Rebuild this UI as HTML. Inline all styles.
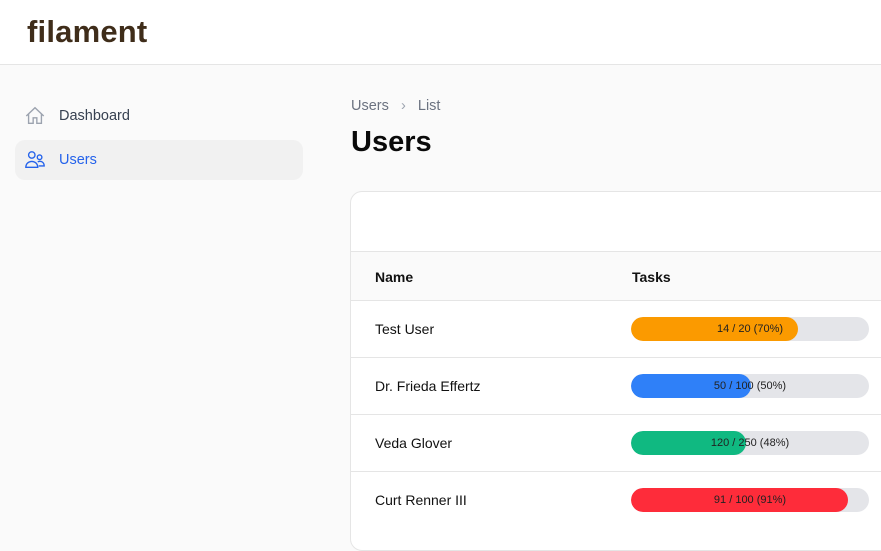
<!DOCTYPE html>
<html><head><style>
*{box-sizing:border-box;margin:0;padding:0}
body{width:881px;height:528px;overflow:hidden;background:#fafafa;font-family:"Liberation Sans",sans-serif;position:relative}
.top{position:absolute;left:0;top:0;width:881px;height:65px;background:#fff;border-bottom:1px solid #e5e5e5}
.logo{position:absolute;left:27px;top:14px;font-size:31px;font-weight:bold;color:#3f2d1a;letter-spacing:0.2px}
.nav{position:absolute;left:15px;width:288px;height:40px;border-radius:10px;font-size:14.5px}
.nav span{position:absolute;left:44px;top:12px}
.nav svg{position:absolute;left:9px;top:9px}
.bc{position:absolute;left:351px;top:98px;font-size:14.5px;color:#6b7280}
h1{position:absolute;left:351px;top:126px;font-size:29px;color:#0a0a0a}
.card{position:absolute;left:350px;top:191px;width:560px;height:360px;background:#fff;border:1px solid #e5e5e5;border-radius:12px}
.hdr{position:absolute;left:0;top:59px;width:100%;height:50px;background:#fafafa;border-top:1px solid #e5e5e5;border-bottom:1px solid #e5e5e5;font-size:14px;font-weight:bold;color:#111}
.row{position:absolute;left:0;width:100%;height:57px;border-bottom:1px solid #e5e5e5;font-size:14px;color:#111}
.nm{position:absolute;left:24px;top:20px}
.bar{position:absolute;left:280px;top:16px;width:238px;height:24px;border-radius:12px;background:#e4e5e9;overflow:hidden}
.fill{position:absolute;left:0;top:0;height:24px;border-radius:12px}
.bt{position:absolute;left:0;top:0;width:100%;text-align:center;line-height:24px;font-size:11px;color:#222}
</style></head><body>
<div class="top"><div class="logo">filament</div></div>
<div class="nav" style="top:96px"><svg width="22" height="22" viewBox="0 0 24 24" fill="none" stroke="#9ca3af" stroke-width="1.5"><path d="M2.5 12L12 3l9.5 9M5 10v10h5v-6h4v6h5V10"/></svg><span style="color:#374151">Dashboard</span></div>
<div class="nav" style="top:140px;background:#f1f1f1"><svg width="22" height="22" viewBox="0 0 24 24" fill="none" stroke="#2563eb" stroke-width="1.5"><circle cx="8.5" cy="6.5" r="3.5"/><circle cx="17" cy="9" r="2.5"/><path d="M2 20c0-4 3-6.5 6.5-6.5S15 16 15 20zM15 14c3-1.5 7 0 7 4.5h-6"/></svg><span style="color:#2563eb">Users</span></div>
<div class="bc">Users &nbsp;&nbsp;<span style="color:#9ca3af">›</span>&nbsp;&nbsp; List</div>
<h1>Users</h1>
<div class="card">
<div class="hdr"><span style="position:absolute;left:24px;top:17px">Name</span><span style="position:absolute;left:281px;top:17px">Tasks</span></div>
<div class="row" style="top:109px"><span class="nm">Test User</span><div class="bar"><div class="fill" style="width:167px;background:#fb9a00"></div><div class="bt">14 / 20 (70%)</div></div></div>
<div class="row" style="top:166px"><span class="nm">Dr. Frieda Effertz</span><div class="bar"><div class="fill" style="width:120px;background:#2f80f8"></div><div class="bt">50 / 100 (50%)</div></div></div>
<div class="row" style="top:223px"><span class="nm">Veda Glover</span><div class="bar"><div class="fill" style="width:115px;background:#10b981"></div><div class="bt">120 / 250 (48%)</div></div></div>
<div class="row" style="top:280px;border:none"><span class="nm">Curt Renner III</span><div class="bar"><div class="fill" style="width:217px;background:#fe2c3a"></div><div class="bt">91 / 100 (91%)</div></div></div>
</div>
</body></html>
